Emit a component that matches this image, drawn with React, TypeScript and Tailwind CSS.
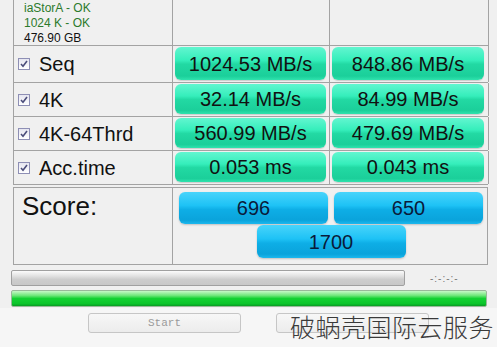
import React from 'react';

type Row = { label: string; a: string; b: string; h: string };

const rows: Row[] = [
    { label: 'Seq', a: '1024.53 MB/s', b: '848.86 MB/s', h: 'h-[37px]' },
    { label: '4K', a: '32.14 MB/s', b: '84.99 MB/s', h: 'h-[34px]' },
    { label: '4K-64Thrd', a: '560.99 MB/s', b: '479.69 MB/s', h: 'h-[34px]' },
    { label: 'Acc.time', a: '0.053 ms', b: '0.043 ms', h: 'h-[34px]' },
];

const greenBox =
    'flex items-center justify-center rounded-[6px] text-[20px] text-[#111] bg-[linear-gradient(to_bottom,#62f6d0_0%,#35eebb_40%,#22d9a3_52%,#1bcf9a_88%,#2fe3ae_100%)] shadow-[0_1px_1px_rgba(0,0,0,0.15)]';

const blueBox =
    'flex items-center justify-center rounded-[6px] text-[20px] text-[#0a1a3a] bg-[linear-gradient(to_bottom,#48d4fb_0%,#1ec2f5_42%,#0eaee6_55%,#0aa3db_88%,#1cb8ee_100%)] shadow-[0_1px_2px_rgba(0,0,0,0.2)]';

function Check() {
    return (
        <span className="flex h-[12px] w-[12px] items-center justify-center border border-[#8e8fb5] bg-[linear-gradient(to_bottom,#e6e6f0,#ffffff)]">
            <svg width="8" height="8" viewBox="0 0 8 8">
                <path d="M1 4 L3 6.2 L7 1" fill="none" stroke="#4a4c7a" strokeWidth="1.6" />
            </svg>
        </span>
    );
}

export default function App() {
    return (
        <div className="relative h-[347px] w-[497px] overflow-hidden bg-[#f0f0f0] font-['Liberation_Sans',Arial,sans-serif]">
            {/* results table */}
            <div className="ml-[13px] w-[475px] border-l border-[#a3a3a3]">
                <div className="grid h-[46px] grid-cols-[159px_157px_159px] border-b border-[#a3a3a3]">
                    <div className="border-r border-[#a3a3a3] pl-[10px] pt-[1px] text-[12px] leading-[15px]">
                        <div className="text-[#2c7a2c]">iaStorA - OK</div>
                        <div className="text-[#2c7a2c]">1024 K - OK</div>
                        <div className="text-[#111]">476.90 GB</div>
                    </div>
                    <div className="border-r border-[#a3a3a3]" />
                    <div className="border-r border-[#a3a3a3]" />
                </div>

                {rows.map((r) => (
                    <div key={r.label} className={`grid ${r.h} grid-cols-[159px_157px_159px] border-b border-[#a3a3a3]`}>
                        <div className="flex items-center gap-[9px] border-r border-[#a3a3a3] pl-[4px] text-[20px] text-[#111]">
                            <Check />
                            <span>{r.label}</span>
                        </div>
                        <div className="border-r border-[#a3a3a3] pb-[2px] pl-[2px] pr-[3px] pt-[1px]">
                            <div className={`${greenBox} h-full`}>{r.a}</div>
                        </div>
                        <div className="border-r border-[#a3a3a3] pb-[2px] pl-[2px] pr-[4px] pt-[1px]">
                            <div className={`${greenBox} h-full`}>{r.b}</div>
                        </div>
                    </div>
                ))}
            </div>

            {/* score */}
            <div className="ml-[13px] mt-[2px] grid h-[78px] w-[475px] grid-cols-[159px_316px] border border-[#a3a3a3]">
                <div className="border-r border-[#a3a3a3] pl-[8px] pt-[3px] text-[26px] leading-[30px] text-[#111]">
                    Score:
                </div>
                <div className="flex flex-col items-center pt-[4px]">
                    <div className="flex gap-[6px]">
                        <div className={`${blueBox} h-[32px] w-[149px]`}>696</div>
                        <div className={`${blueBox} h-[32px] w-[149px]`}>650</div>
                    </div>
                    <div className={`${blueBox} mt-[1px] h-[33px] w-[149px]`}>1700</div>
                </div>
            </div>

            {/* progress */}
            <div className="ml-[11px] mt-[5px] flex items-center">
                <div className="h-[16px] w-[394px] rounded-[2px] border border-[#a0a0a0] bg-[linear-gradient(to_bottom,#fbfbfb_0%,#e2e2e2_35%,#cdcdcd_60%,#c8c8c8_100%)]" />
                <span className="ml-[25px] text-[10px] tracking-[1px] text-[#777]">-:-:-:-</span>
            </div>
            <div className="ml-[11px] mt-[4px] h-[17px] w-[476px] rounded-[2px] border border-[#9ab89a] bg-[linear-gradient(to_bottom,#c8f8c8_0%,#6fe77a_30%,#14d132_50%,#0bc42a_85%,#0a9a22_100%)]" />

            {/* buttons */}
            <div className="mt-[1px] flex h-[40px] bg-[#f6f6f6] pl-[88px] pt-[5px]">
                <div className="flex h-[20px] w-[153px] items-center justify-center rounded-[3px] border border-[#c6c6c6] bg-[linear-gradient(to_bottom,#f7f7f7,#ececec)] font-['Liberation_Mono',monospace] text-[11px] text-[#9a9a9a]">
                    Start
                </div>
                <div className="ml-[35px] h-[20px] w-[153px] rounded-[3px] border border-[#c6c6c6] bg-[linear-gradient(to_bottom,#f7f7f7,#ececec)]" />
            </div>

            {/* watermark */}
            <div className="absolute left-[290px] top-[311px] whitespace-nowrap font-['Noto_Sans_CJK_SC',sans-serif] text-[25px] font-light leading-[30px] tracking-[0.5px] text-[#3a3a3a]">
                破蜗壳国际云服务
            </div>
        </div>
    );
}
